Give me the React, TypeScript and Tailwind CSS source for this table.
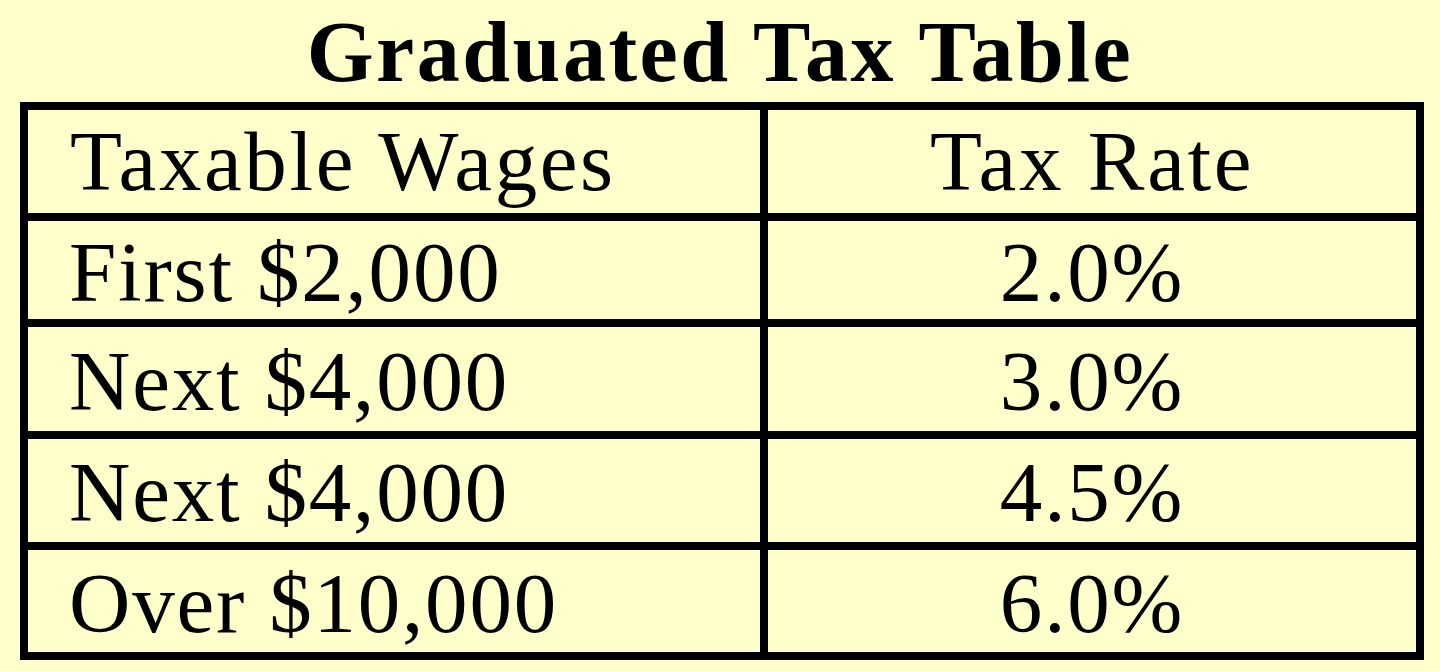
const rows = [
  { wages: "First $2,000", rate: "2.0%", h: "h-[106px]" },
  { wages: "Next $4,000", rate: "3.0%", h: "h-[112px]" },
  { wages: "Next $4,000", rate: "4.5%", h: "h-[111px]" },
  { wages: "Over $10,000", rate: "6.0%", h: "h-[110px]" },
];

export default function App() {
  return (
    <div className="min-h-[671px] w-[1440px] bg-[#ffffcc] font-['Liberation_Serif',serif] text-black">
      {/* Caption */}
      <h1 className="pt-[2px] text-center text-[86px] leading-[100px] font-bold tracking-[2.5px]">
        Graduated Tax Table
      </h1>

      <table className="ml-[20px] w-[1404px] table-fixed border-collapse border-[8px] border-black text-[85px] leading-none tracking-[1.8px]">
        <colgroup>
          <col className="w-[740px]" />
          <col className="w-[656px]" />
        </colgroup>
        <thead>
          <tr className="h-[111px]">
            <th className="border-[8px] border-black p-0 pl-[42px] text-left font-normal tracking-[2.6px]">
              Taxable Wages
            </th>
            <th className="border-[8px] border-black p-0 text-center font-normal tracking-[2.6px]">
              Tax Rate
            </th>
          </tr>
        </thead>
        <tbody>
          {rows.map((r, i) => (
            <tr key={i} className={r.h}>
              <td className="border-[8px] border-black p-0 pl-[41px] pt-[4px]">
                {r.wages}
              </td>
              <td className="border-[8px] border-black p-0 pt-[4px] text-center">
                {r.rate}
              </td>
            </tr>
          ))}
        </tbody>
      </table>
    </div>
  );
}
